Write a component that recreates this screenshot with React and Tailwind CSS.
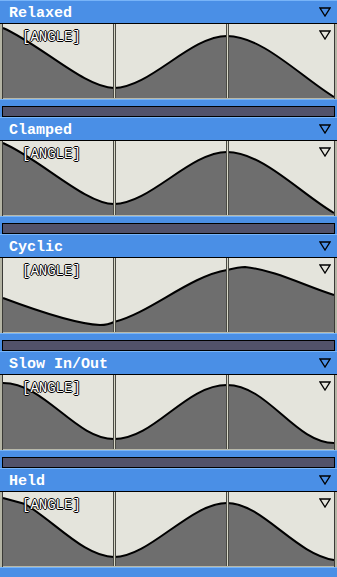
import React from 'react'

const panels = [
  { title: 'Relaxed', curve: 'M3,4 C40,20 85,64 114,64 C150,64 190,12 227,12 C262,12 300,52 334,73' },
  { title: 'Clamped', curve: 'M3,2 C40,18 85,63 114,63 C150,63 190,11 227,11 C262,11 300,52 334,72' },
  { title: 'Cyclic', curve: 'M3,40 C35,52 75,66 100,67 C108,67 112,65 114,64 C150,55 190,18 227,12 C235,10 240,9 245,9 C275,12 305,28 334,37' },
  { title: 'Slow In/Out', curve: 'M3,8 C45,8 75,64 114,64 C155,64 185,10 227,10 C268,10 295,68 334,68' },
  { title: 'Held', curve: 'M3,6 L25,12 C55,30 85,65 114,65 C150,65 190,11 227,11 C262,11 295,62 334,68' },
]

function Tri() {
  return (
    <svg width="12" height="10" viewBox="0 0 12 10">
      <path d="M1,1 L11,1 L6,9 Z" fill="none" stroke="#000" strokeWidth="1.3" />
    </svg>
  )
}

function Graph({ curve }) {
  return (
    <div className="relative h-[75px]">
      <svg width="337" height="75" viewBox="0 0 337 75" className="block">
        <rect x="0" y="0" width="337" height="75" fill="#e4e4dc" />
        <path d={curve + ' L334,75 L3,75 Z'} fill="#6e6e6e" />
        <path d={curve} fill="none" stroke="#000" strokeWidth="2" />
        {/* key lines */}
        <rect x="113" y="0" width="1" height="75" fill="#4a4a44" />
        <rect x="114" y="0" width="1" height="75" fill="#d8d8c8" />
        <rect x="115" y="0" width="1" height="75" fill="#4a4a44" />
        <rect x="226" y="0" width="1" height="75" fill="#4a4a44" />
        <rect x="227" y="0" width="1" height="75" fill="#d8d8c8" />
        <rect x="228" y="0" width="1" height="75" fill="#4a4a44" />
        {/* edges */}
        <rect x="0" y="0" width="2" height="75" fill="#b4b4a4" />
        <rect x="2" y="0" width="1" height="75" fill="#3a3a36" />
        <rect x="334" y="0" width="1" height="75" fill="#3a3a36" />
        <rect x="335" y="0" width="2" height="75" fill="#b4b4a4" />
        <rect x="3" y="74" width="331" height="1" fill="#b8b8a8" />
      </svg>
      <span className="absolute left-[22px] top-[6px] font-['Liberation_Mono',monospace] text-[14px] leading-none text-white [text-shadow:1px_0_0_#000,-1px_0_0_#000,0_1px_0_#000,0_-1px_0_#000]">
        [ANGLE]
      </span>
      <div className="absolute right-[6px] top-[6px] flex">
        <Tri />
      </div>
    </div>
  )
}

function Panel({ title, curve, last }) {
  return (
    <div className="flex flex-col">
      <div className="flex h-[23px] items-center justify-between border-t border-[#78b4f8] bg-[#4a8fe6] pl-[9px] pr-[6px]">
        <span className="pt-[3px] font-['Liberation_Mono',monospace] text-[15px] font-bold leading-none text-white">{title}</span>
        <Tri />
      </div>
      <div className="h-px bg-black" />
      <Graph curve={curve} />
      {last ? (
        <div className="h-[10px] border-t border-[#78b4f8] bg-[#4a8fe6]" />
      ) : (
        <>
          <div className="h-[7px] border-t border-[#78b4f8] bg-[#4a8fe6]" />
          <div className="h-[11px] bg-[#4a8fe6] px-[2px]">
            <div className="h-full border border-black bg-[#52526a]" />
          </div>
        </>
      )}
    </div>
  )
}

export default function App() {
  return (
    <div className="h-[577px] w-[337px] overflow-hidden bg-[#52526a]">
      {panels.map((p, i) => (
        <Panel key={p.title} title={p.title} curve={p.curve} last={i === panels.length - 1} />
      ))}
    </div>
  )
}
